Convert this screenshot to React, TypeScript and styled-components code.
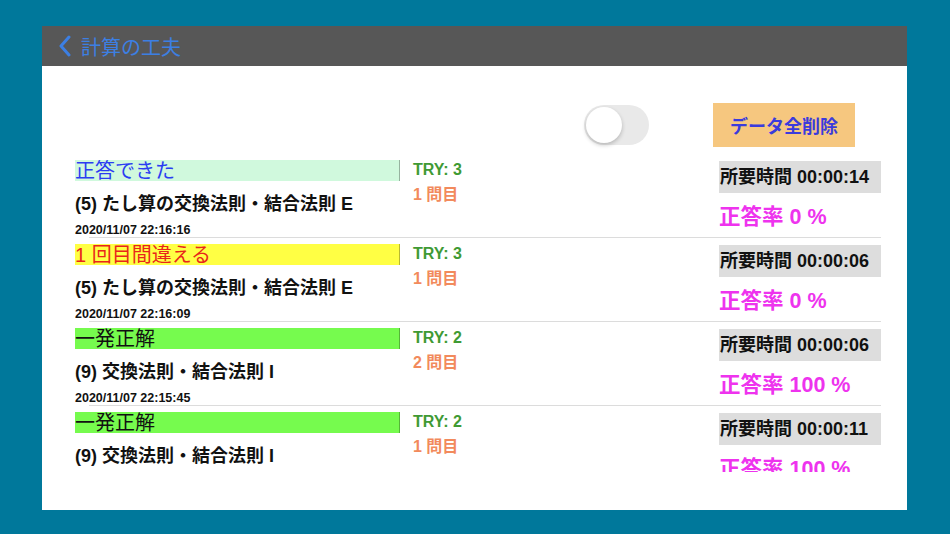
import React, { FC } from 'react';
import styled, { createGlobalStyle } from 'styled-components';

/**
 * * styled-components
 */
const GlobalStyle = createGlobalStyle`
    html, body {
        margin: 0;
        padding: 0;
        background-color: #00789b;
        font-family: "Liberation Sans", "Noto Sans CJK JP", sans-serif;
    }
`;

const Page = styled.div`
    width: 950px;
    height: 534px;
    padding: 26px 43px 24px 42px;
    box-sizing: border-box;
    background-color: #00789b;
`;

const Frame = styled.div`
    display: flex;
    flex-direction: column;
    width: 865px;
    height: 484px;
    background-color: #fff;
`;

const Header = styled.header`
    display: flex;
    align-items: center;
    gap: 9px;
    height: 40px;
    padding-left: 16px;
    background-color: #575757;
    color: #3c7fe3;
    font-size: 20px;
`;

const Toolbar = styled.div`
    display: flex;
    align-items: center;
    justify-content: flex-end;
    gap: 64px;
    height: 44px;
    padding: 37px 52px 7px 0;
`;

const Toggle = styled.div`
    display: flex;
    align-items: center;
    width: 65px;
    height: 40px;
    padding: 2px;
    box-sizing: border-box;
    border-radius: 20px;
    background-color: #e9e9e9;
`;

const Knob = styled.div`
    width: 36px;
    height: 36px;
    border-radius: 50%;
    background-color: #fff;
    box-shadow: 0 2px 4px rgba(0, 0, 0, 0.22);
`;

const DeleteButton = styled.button`
    width: 142px;
    height: 44px;
    border: none;
    background-color: #f6c77f;
    color: #3b3bdc;
    font-family: inherit;
    font-size: 18px;
    font-weight: bold;
`;

const List = styled.div`
    height: 318px;
    overflow: hidden;
`;

const Row = styled.div`
    display: grid;
    grid-template-columns: 325px 293px 162px;
    column-gap: 13px;
    height: 83px;
    padding-left: 33px;
    overflow: hidden;
`;

const Divider = styled.div`
    height: 1px;
    margin: 0 26px 0 47px;
    background-color: #dcdcdc;
`;

const Column = styled.div`
    display: flex;
    flex-direction: column;
    align-items: flex-start;
`;

const Status = styled.div<{ $bg: string; $color: string }>`
    align-self: stretch;
    height: 21px;
    margin-top: 6px;
    line-height: 22px;
    font-size: 20px;
    color: ${p => p.$color};
    background-color: ${p => p.$bg};
    border-right: 1px solid rgba(0, 0, 0, 0.28);
    white-space: nowrap;
`;

const Title = styled.div`
    margin-top: 11px;
    line-height: 25px;
    font-size: 18px;
    font-weight: bold;
    color: #111;
    white-space: nowrap;
`;

const DateText = styled.div`
    margin-top: 6px;
    line-height: 15px;
    font-size: 12.5px;
    font-weight: bold;
    color: #111;
`;

const Try = styled.div`
    margin-top: 6px;
    line-height: 20px;
    font-size: 16px;
    font-weight: bold;
    color: #3f9a34;
`;

const Question = styled.div`
    margin-top: 5px;
    line-height: 20px;
    font-size: 16px;
    font-weight: bold;
    color: #f28a5c;
`;

const TimeBox = styled.div`
    align-self: stretch;
    height: 32px;
    margin-top: 7px;
    padding-left: 1px;
    line-height: 32px;
    font-size: 18px;
    font-weight: bold;
    color: #111;
    background-color: #dddddd;
    white-space: nowrap;
`;

const Rate = styled.div`
    margin-top: 12px;
    line-height: 24px;
    font-size: 21.5px;
    font-weight: bold;
    color: #ee33ee;
    white-space: nowrap;
`;

/**
 * * data
 */
type ResultType = {
    status: string
    statusBg: string
    statusColor: string
    title: string
    date: string
    tries: number
    question: number
    time: string
    rate: number
}

const results: Array<ResultType> = [
    { status: '正答できた', statusBg: '#d0f9dd', statusColor: '#2b3df2', title: '(5) たし算の交換法則・結合法則 E', date: '2020/11/07 22:16:16', tries: 3, question: 1, time: '00:00:14', rate: 0 },
    { status: '1 回目間違える', statusBg: '#ffff44', statusColor: '#e8261a', title: '(5) たし算の交換法則・結合法則 E', date: '2020/11/07 22:16:09', tries: 3, question: 1, time: '00:00:06', rate: 0 },
    { status: '一発正解', statusBg: '#76fb4e', statusColor: '#111', title: '(9) 交換法則・結合法則 I', date: '2020/11/07 22:15:45', tries: 2, question: 2, time: '00:00:06', rate: 100 },
    { status: '一発正解', statusBg: '#76fb4e', statusColor: '#111', title: '(9) 交換法則・結合法則 I', date: '2020/11/07 22:15:30', tries: 2, question: 1, time: '00:00:11', rate: 100 },
];

/**
 * * React Components
 */
const BackIcon: FC = () => (
    <svg width="14" height="22" viewBox="0 0 14 22">
        <path d="M11 2 L3 11 L11 20" fill="none" stroke="#3c7fe3" strokeWidth="3"
            strokeLinecap="round" strokeLinejoin="round" />
    </svg>
);

const ResultRow: FC<{ result: ResultType }> = ({ result }) => (
    <>
        <Row>
            <Column>
                <Status $bg={result.statusBg} $color={result.statusColor}>{result.status}</Status>
                <Title>{result.title}</Title>
                <DateText>{result.date}</DateText>
            </Column>
            <Column>
                <Try>TRY: {result.tries}</Try>
                <Question>{result.question} 問目</Question>
            </Column>
            <Column>
                <TimeBox>所要時間 {result.time}</TimeBox>
                <Rate>正答率 {result.rate} %</Rate>
            </Column>
        </Row>
        <Divider />
    </>
);

const App: FC = () => (
    <Page>
        <GlobalStyle />
        <Frame>
            <Header>
                <BackIcon />
                <span>計算の工夫</span>
            </Header>
            <Toolbar>
                <Toggle><Knob /></Toggle>
                <DeleteButton>データ全削除</DeleteButton>
            </Toolbar>
            <List>
                {results.map((r, i) => <ResultRow key={i} result={r} />)}
            </List>
        </Frame>
    </Page>
);

export default App;
